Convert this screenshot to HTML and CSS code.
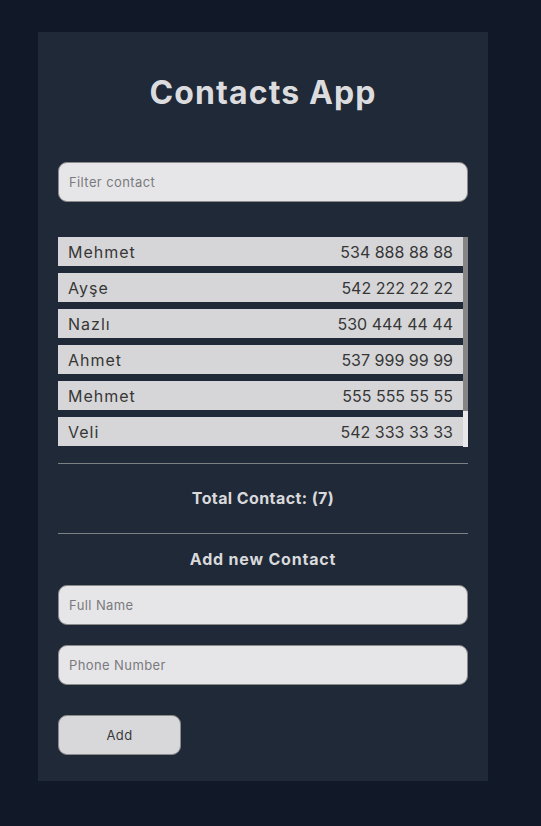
FILE: index.html
```html
<!DOCTYPE html>
<html>
<head>
<meta charset="utf-8">
<link rel="stylesheet" href="styles.css">
</head>
<body>
<div class="card">
  <h1 class="title">Contacts App</h1>
  <input class="field filter" type="text" placeholder="Filter contact">
  <div class="list">
    <ul class="rows">
      <li class="row"><span class="nm">Mehmet</span><span>534 888 88 88</span></li>
      <li class="row"><span class="nm">Ayşe</span><span>542 222 22 22</span></li>
      <li class="row"><span class="nm">Nazlı</span><span>530 444 44 44</span></li>
      <li class="row"><span class="nm">Ahmet</span><span>537 999 99 99</span></li>
      <li class="row"><span class="nm">Mehmet</span><span>555 555 55 55</span></li>
      <li class="row"><span class="nm">Veli</span><span>542 333 33 33</span></li>
    </ul>
    <div class="scrollbar"><div class="thumb"></div></div>
  </div>
  <hr class="sep sep-top">
  <div class="total">Total Contact: (7)</div>
  <hr class="sep sep-bottom">
  <div class="subtitle">Add new Contact</div>
  <input class="field name" type="text" placeholder="Full Name">
  <input class="field phone" type="text" placeholder="Phone Number">
  <button class="btn">Add</button>
</div>
</body>
</html>
```
FILE: styles.css
```css
html, body {
  margin: 0;
  padding: 0;
  background: #111827;
  font-family: Inter, "Noto Sans", sans-serif;
}
body {
  padding-top: 32px;
  height: 826px;
  box-sizing: border-box;
}
.card {
  margin-left: 38px;
  width: 450px;
  height: 749px;
  box-sizing: border-box;
  background: #1f2937;
  padding: 41px 20px 0 20px;
  display: flex;
  flex-direction: column;
}
.title {
  margin: 0;
  height: 40px;
  line-height: 40px;
  font-size: 32px;
  font-weight: 700;
  color: #dcdcdf;
  text-align: center;
  letter-spacing: 1.1px;
}
.field {
  display: block;
  width: 410px;
  height: 40px;
  box-sizing: border-box;
  border: 1px solid #8a8a8a;
  border-radius: 9px;
  background: #e6e6e9;
  padding: 0 10px;
  font-family: Inter, "Noto Sans", sans-serif;
  font-size: 13px;
  letter-spacing: 0.4px;
  color: #333;
  outline: none;
}
.field::placeholder {
  color: #7a7a7d;
}
.filter {
  margin-top: 49px;
}
.list {
  margin-top: 35px;
  height: 210px;
  width: 410px;
  display: flex;
  overflow: hidden;
}
.rows {
  list-style: none;
  margin: 0;
  padding: 0;
  flex: 1;
}
.scrollbar {
  width: 5px;
  background: #e8e8ea;
  display: flex;
  flex-direction: column;
}
.thumb {
  height: 174px;
  background: #858585;
}
.row {
  height: 29px;
  margin-bottom: 7px;
  background: #d6d6d9;
  padding: 0 10px;
  display: flex;
  justify-content: space-between;
  align-items: center;
  font-size: 16px;
  color: #363636;
  box-sizing: border-box;
}
.nm {
  letter-spacing: 1px;
}
.sep {
  border: none;
  height: 1px;
  background: #7c7f84;
  margin: 0;
  width: 410px;
}
.sep-top {
  margin-top: 16px;
}
.total {
  margin-top: 24px;
  height: 20px;
  line-height: 20px;
  text-align: center;
  font-size: 16px;
  font-weight: 700;
  color: #d9d9dc;
  letter-spacing: 0.4px;
}
.sep-bottom {
  margin-top: 25px;
}
.subtitle {
  margin-top: 15px;
  height: 20px;
  line-height: 20px;
  text-align: center;
  font-size: 16px;
  font-weight: 700;
  color: #d9d9dc;
  letter-spacing: 0.8px;
}
.name {
  margin-top: 16px;
}
.phone {
  margin-top: 20px;
}
.btn {
  margin-top: 30px;
  width: 123px;
  height: 40px;
  box-sizing: border-box;
  border: 1px solid #8a8a8a;
  border-radius: 9px;
  background: #d8d8db;
  font-family: Inter, "Noto Sans", sans-serif;
  font-size: 13px;
  letter-spacing: 0.4px;
  color: #3a3a3a;
  cursor: pointer;
}
```
